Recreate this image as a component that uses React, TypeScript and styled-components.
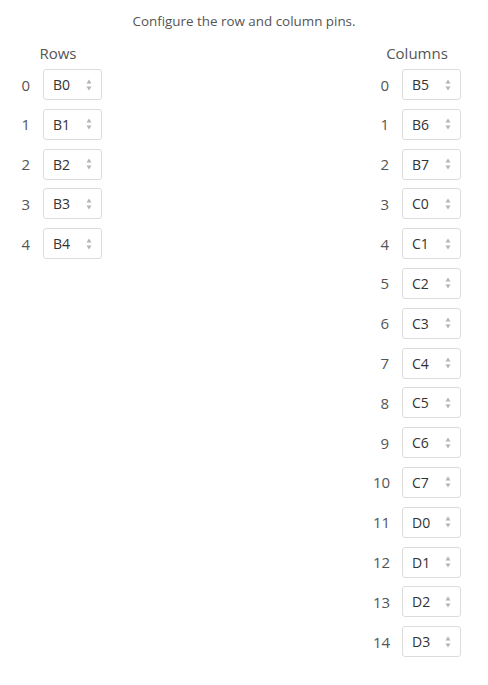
import React from "react";
import styled, { createGlobalStyle } from "styled-components";

const GlobalStyle = createGlobalStyle`
  body {
    margin: 0;
    background: #fff;
    font-family: "Open Sans", "Noto Sans", sans-serif;
  }
`;

const Page = styled.div`
  width: 488px;
  padding-top: 12px;
`;

const Title = styled.p`
  margin: 0;
  text-align: center;
  font-size: 13.4px;
  line-height: 18px;
  color: #555;
`;

const Groups = styled.div`
  display: flex;
  justify-content: space-between;
  align-items: flex-start;
  padding: 13px 27px 0 14px;
`;

const Group = styled.div`
  display: flex;
  flex-direction: column;
`;

const Heading = styled.div`
  text-align: center;
  font-size: 15px;
  line-height: 20px;
  color: #555;
  margin-bottom: 6px;
`;

const PinRow = styled.div`
  display: flex;
  align-items: center;
  gap: 13px;
  margin-bottom: 8.8px;
`;

const Index = styled.span`
  width: 16px;
  text-align: right;
  font-size: 15px;
  color: #555;
`;

const Select = styled.div`
  box-sizing: border-box;
  width: 59px;
  height: 31px;
  display: flex;
  align-items: center;
  justify-content: space-between;
  padding: 0 9px 0 9px;
  border: 1px solid #dcdcdc;
  border-radius: 3px;
  font-size: 14px;
  color: #333;
`;

// up/down chevrons of the native select
const Arrows = () => (
  <svg width="6" height="12" viewBox="0 0 6 12">
    <path d="M3 0.5 L5.5 4.5 L0.5 4.5 Z" fill="#b4b4b4" />
    <path d="M3 11.5 L5.5 7.5 L0.5 7.5 Z" fill="#b4b4b4" />
  </svg>
);

const rows = ["B0", "B1", "B2", "B3", "B4"];
const columns = ["B5", "B6", "B7", "C0", "C1", "C2", "C3", "C4", "C5", "C6", "C7", "D0", "D1", "D2", "D3"];

function PinList({ title, pins }: { title: string; pins: string[] }) {
  return (
    <Group>
      <Heading>{title}</Heading>
      {pins.map((pin, i) => (
        <PinRow key={i}>
          <Index>{i}</Index>
          <Select>
            {pin}
            <Arrows />
          </Select>
        </PinRow>
      ))}
    </Group>
  );
}

export default function App() {
  return (
    <Page>
      <GlobalStyle />
      <Title>Configure the row and column pins.</Title>
      <Groups>
        <PinList title="Rows" pins={rows} />
        <PinList title="Columns" pins={columns} />
      </Groups>
    </Page>
  );
}
